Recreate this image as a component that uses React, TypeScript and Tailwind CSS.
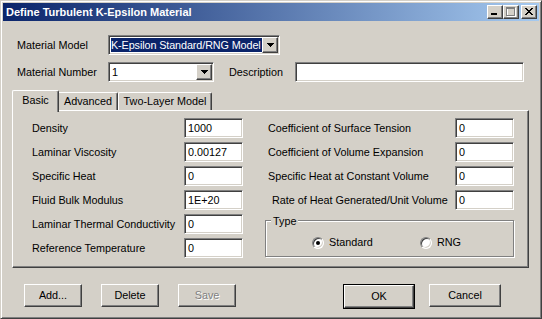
import React from "react";

const raised =
  "border border-t-white border-l-white border-r-[#404040] border-b-[#404040] shadow-[inset_-1px_-1px_0_#808080,inset_1px_1px_0_#d4d0c8]";
const sunken =
  "border border-t-[#808080] border-l-[#808080] border-r-white border-b-white shadow-[inset_1px_1px_0_#404040,inset_-1px_-1px_0_#d4d0c8]";

function Arrow() {
  return (
    <svg width="7" height="4" viewBox="0 0 7 4" shapeRendering="crispEdges">
      <rect x="0" y="0" width="7" height="1" fill="#000" />
      <rect x="1" y="1" width="5" height="1" fill="#000" />
      <rect x="2" y="2" width="3" height="1" fill="#000" />
      <rect x="3" y="3" width="1" height="1" fill="#000" />
    </svg>
  );
}

function Combo({ width, children }: { width: string; children: React.ReactNode }) {
  return (
    <div className={`${sunken} ${width} h-[20px] bg-white flex p-[1px]`}>
      <div className="flex-1 flex items-center overflow-hidden pl-[1px]">{children}</div>
      <div className={`${raised} w-[16px] h-full flex items-center justify-center bg-[#d4d0c8]`}>
        <Arrow />
      </div>
    </div>
  );
}

function Input({ value, width = "w-[59px]" }: { value?: string; width?: string }) {
  return (
    <div className={`${sunken} ${width} h-[20px] bg-white flex items-center pl-[3px]`}>
      <span>{value}</span>
    </div>
  );
}

const xPixels: [number, number][] = [
  [0, 0], [1, 0], [6, 0], [7, 0],
  [1, 1], [2, 1], [5, 1], [6, 1],
  [2, 2], [3, 2], [4, 2], [5, 2],
  [3, 3], [4, 3],
  [2, 4], [3, 4], [4, 4], [5, 4],
  [1, 5], [2, 5], [5, 5], [6, 5],
  [0, 6], [1, 6], [6, 6], [7, 6],
];

function CapBtn({ kind }: { kind: "min" | "max" | "close" }) {
  return (
    <div className={`${raised} w-[16px] h-[14px] bg-[#d4d0c8] relative`}>
      {kind === "min" && (
        <svg className="absolute left-[3px] top-[7px]" width="6" height="2" shapeRendering="crispEdges">
          <rect x="0" y="0" width="6" height="2" fill="#000" />
        </svg>
      )}
      {kind === "max" && (
        <svg className="absolute left-[2px] top-[1px]" width="10" height="10" shapeRendering="crispEdges">
          <rect x="1.5" y="1.5" width="8" height="8" fill="none" stroke="#fff" />
          <rect x="0.5" y="0.5" width="8" height="8" fill="none" stroke="#808080" />
          <rect x="0" y="1" width="9" height="1" fill="#808080" />
        </svg>
      )}
      {kind === "close" && (
        <svg className="absolute left-[3px] top-[2px]" width="8" height="7" shapeRendering="crispEdges">
          {xPixels.map(([x, y]) => (
            <rect key={`${x}-${y}`} x={x} y={y} width="1" height="1" fill="#000" />
          ))}
        </svg>
      )}
    </div>
  );
}

function Radio({ checked }: { checked?: boolean }) {
  return (
    <div className="w-[12px] h-[12px] rounded-full bg-white border border-t-[#808080] border-l-[#808080] border-b-white border-r-white shadow-[inset_1px_1px_0_#404040,inset_-1px_-1px_0_#d4d0c8] flex items-center justify-center">
      {checked && <div className="w-[4px] h-[4px] rounded-full bg-black" />}
    </div>
  );
}

function Button({ label, disabled, width = "w-[58px]" }: { label: string; disabled?: boolean; width?: string }) {
  return (
    <div className={`${raised} ${width} h-[23px] flex items-center justify-center bg-[#d4d0c8]`}>
      <span className={disabled ? "text-[#808080] [text-shadow:1px_1px_0_#fff]" : ""}>{label}</span>
    </div>
  );
}

const leftRows: [string, string][] = [
  ["Density", "1000"],
  ["Laminar Viscosity", "0.00127"],
  ["Specific Heat", "0"],
  ["Fluid Bulk Modulus", "1E+20"],
  ["Laminar Thermal Conductivity", "0"],
  ["Reference Temperature", "0"],
];

const rightRows: [string, string, string][] = [
  ["Coefficient of Surface Tension", "0", "pl-[3px]"],
  ["Coefficient of Volume Expansion", "0", "pl-[3px]"],
  ["Specific Heat at Constant Volume", "0", "pl-[3px]"],
  ["Rate of Heat Generated/Unit Volume", "0", "pl-[7px]"],
];

export default function App() {
  return (
    <div className="font-['Liberation_Sans',Arial,sans-serif] text-[10.8px] leading-none text-black w-[542px] h-[319px] bg-[#d4d0c8] border border-t-[#d4d0c8] border-l-[#d4d0c8] border-r-[#404040] border-b-[#404040] shadow-[inset_1px_1px_0_#fff,inset_-1px_-1px_0_#808080] p-[2px] flex flex-col select-none overflow-hidden">
      {/* Title bar */}
      <div className="h-[18px] shrink-0 flex items-center bg-[linear-gradient(to_right,#0a246a,#a6caf0)] pl-[3px] pr-[2px]">
        <span className="text-white font-bold text-[11px] flex-1 whitespace-nowrap">Define Turbulent K-Epsilon Material</span>
        <div className="flex">
          <CapBtn kind="min" />
          <CapBtn kind="max" />
          <div className="w-[2px]" />
          <CapBtn kind="close" />
        </div>
      </div>

      {/* Material Model */}
      <div className="mt-[14px] h-[20px] flex items-center">
        <div className="w-[105px] pl-[14px] whitespace-nowrap">Material Model</div>
        <Combo width="w-[172px]">
          <span className="bg-[#0a246a] text-white h-[14px] flex items-center whitespace-nowrap w-full overflow-hidden tracking-[-0.1px]">
            K-Epsilon Standard/RNG Model
          </span>
        </Combo>
      </div>

      {/* Material Number + Description */}
      <div className="mt-[7px] h-[20px] flex items-center">
        <div className="w-[105px] pl-[14px] whitespace-nowrap">Material Number</div>
        <Combo width="w-[106px]">
          <span className="pl-[1px]">1</span>
        </Combo>
        <div className="ml-[15px] w-[66px] whitespace-nowrap">Description</div>
        <Input width="w-[229px]" />
      </div>

      {/* Tabs */}
      <div className="mt-[8px] ml-[9px] h-[20px] flex items-start shrink-0">
        <div className="relative z-10 w-[47px] h-[22px] bg-[#d4d0c8] border-t border-l border-r border-t-white border-l-white border-r-[#404040] shadow-[inset_-1px_0_0_#808080] rounded-t-[2px] flex justify-center pt-[4px]">
          Basic
        </div>
        <div className="mt-[2px] w-[59px] h-[18px] border-t border-r border-t-white border-r-[#404040] shadow-[inset_-1px_0_0_#808080] rounded-tr-[2px] flex justify-center pt-[3px]">
          Advanced
        </div>
        <div className="mt-[2px] w-[94px] h-[18px] border-t border-l border-r border-t-white border-l-white border-r-[#404040] shadow-[inset_-1px_0_0_#808080] rounded-t-[2px] flex justify-center pt-[3px] whitespace-nowrap">
          Two-Layer Model
        </div>
      </div>

      {/* Tab panel */}
      <div className="ml-[9px] w-[517px] h-[158px] shrink-0 border border-t-white border-l-white border-r-[#404040] border-b-[#404040] shadow-[inset_-1px_-1px_0_#808080] pt-[7px] pl-[19px] flex items-start">
        <div className="grid grid-cols-[152px_59px] gap-y-[4px] items-center">
          {leftRows.map(([label, value]) => (
            <React.Fragment key={label}>
              <div className="whitespace-nowrap">{label}</div>
              <Input value={value} />
            </React.Fragment>
          ))}
        </div>
        <div className="ml-[22px] w-[249px] flex flex-col">
          <div className="grid grid-cols-[190px_59px] gap-y-[4px] items-center">
            {rightRows.map(([label, value, pad]) => (
              <React.Fragment key={label}>
                <div className={`whitespace-nowrap ${pad}`}>{label}</div>
                <Input value={value} />
              </React.Fragment>
            ))}
          </div>
          <div className="relative mt-[10px] h-[37px] border border-[#808080] shadow-[1px_1px_0_#fff,inset_1px_1px_0_#fff] flex items-center pt-[8px]">
            <span className="absolute -top-[5px] left-[5px] px-[2px] bg-[#d4d0c8]">Type</span>
            <div className="ml-[46px] w-[108px] flex items-center gap-[5px]">
              <Radio checked />
              <span>Standard</span>
            </div>
            <div className="flex items-center gap-[5px]">
              <Radio />
              <span>RNG</span>
            </div>
          </div>
        </div>
      </div>

      {/* Buttons */}
      <div className="mt-[16px] flex">
        <div className="ml-[21px]">
          <Button label="Add..." />
        </div>
        <div className="ml-[19px]">
          <Button label="Delete" />
        </div>
        <div className="ml-[19px]">
          <Button label="Save" disabled />
        </div>
        <div className="ml-[107px] border border-black">
          <Button label="OK" width="w-[70px]" />
        </div>
        <div className="ml-[14px]">
          <Button label="Cancel" width="w-[72px]" />
        </div>
      </div>
    </div>
  );
}
